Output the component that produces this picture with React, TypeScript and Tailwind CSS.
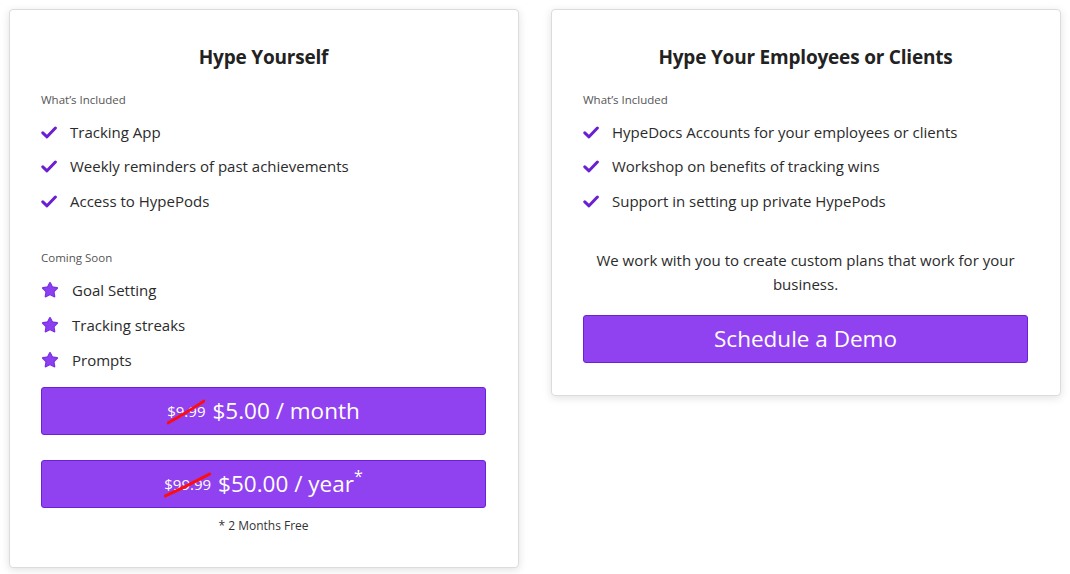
import { Star } from "lucide-react";

const font = { fontFamily: '"Open Sans", "Noto Sans", sans-serif' };

function Strike({ children }: { children: React.ReactNode }) {
  return (
    <span className="relative mr-[7px] inline-block text-[15px] leading-none">
      {children}
      <svg className="absolute left-0 top-[-6px] h-[28px] w-full" viewBox="0 0 40 28" preserveAspectRatio="none">
        <path d="M1 25 Q 18 16 39 3" stroke="#ff0d0d" strokeWidth="2.8" fill="none" strokeLinecap="round" />
      </svg>
    </span>
  );
}

function CheckMark() {
  return (
    <svg className="mr-[13px] h-[13px] w-[16px] shrink-0" viewBox="0 0 16 13">
      <path d="M1.8 6.8 L6 10.8 L14.4 2" stroke="#6a1fd1" strokeWidth="3" fill="none" strokeLinecap="round" strokeLinejoin="round" />
    </svg>
  );
}

function Item({ icon, text }: { icon: "check" | "star"; text: string }) {
  return (
    <li className="flex h-6 items-center text-[15px] text-[#2b2b2b]">
      {icon === "check" ? (
        <CheckMark />
      ) : (
        <Star className="mr-[13px] h-[18px] w-[18px] shrink-0 fill-[#8b3ff0] text-[#7a30e0]" strokeWidth={1.5} />
      )}
      {text}
    </li>
  );
}

function Label({ children, className = "" }: { children: React.ReactNode; className?: string }) {
  return <div className={"text-[11.5px] leading-4 text-[#555] " + className}>{children}</div>;
}

function PurpleButton({ children, className = "" }: { children: React.ReactNode; className?: string }) {
  return (
    <button className={"flex h-12 w-full items-center justify-center rounded-[3px] border border-[#6a22d6] bg-[#9142f0] text-[22.5px] text-white " + className}>
      {children}
    </button>
  );
}

export default function App() {
  return (
    <div className="flex min-h-[574px] items-start gap-8 bg-white p-[9px]" style={font}>
      <div className="w-[510px] rounded-[4px] border border-[#dcdcdc] bg-white pl-[31px] pr-[32px] pb-[33px] pt-[33px] shadow-[0_2px_8px_rgba(0,0,0,0.12)]">
        <h2 className="text-center text-[19px] font-bold leading-7 tracking-[-0.2px] text-[#222]">Hype Yourself</h2>
        <Label className="mt-[21px]">What’s Included</Label>
        <ul className="mt-3 flex flex-col gap-[10.5px]">
          <Item icon="check" text="Tracking App" />
          <Item icon="check" text="Weekly reminders of past achievements" />
          <Item icon="check" text="Access to HypePods" />
        </ul>
        <Label className="mt-[37px]">Coming Soon</Label>
        <ul className="mt-3 flex flex-col gap-[11px]">
          <Item icon="star" text="Goal Setting" />
          <Item icon="star" text="Tracking streaks" />
          <Item icon="star" text="Prompts" />
        </ul>
        <PurpleButton className="mt-[15px]">
          <Strike>$9.99</Strike>
          $5.00 / month
        </PurpleButton>
        <PurpleButton className="mt-[25px]">
          <Strike>$99.99</Strike>
          $50.00 / year<sup className="text-[16px]">*</sup>
        </PurpleButton>
        <div className="mt-[10px] text-center text-[12px] leading-4 text-[#333]">* 2 Months Free</div>
      </div>

      <div className="w-[510px] rounded-[4px] border border-[#dcdcdc] bg-white pl-[31px] pr-[32px] pb-8 pt-[33px] shadow-[0_2px_8px_rgba(0,0,0,0.12)]">
        <h2 className="text-center text-[19px] font-bold leading-7 tracking-[-0.2px] text-[#222]">Hype Your Employees or Clients</h2>
        <Label className="mt-[21px]">What’s Included</Label>
        <ul className="mt-3 flex flex-col gap-[10.5px]">
          <Item icon="check" text="HypeDocs Accounts for your employees or clients" />
          <Item icon="check" text="Workshop on benefits of tracking wins" />
          <Item icon="check" text="Support in setting up private HypePods" />
        </ul>
        <p className="mt-9 text-center text-[15px] leading-[23.5px] text-[#2b2b2b]">
          We work with you to create custom plans that work for your business.
        </p>
        <PurpleButton className="mt-[19px]">Schedule a Demo</PurpleButton>
      </div>
    </div>
  );
}
